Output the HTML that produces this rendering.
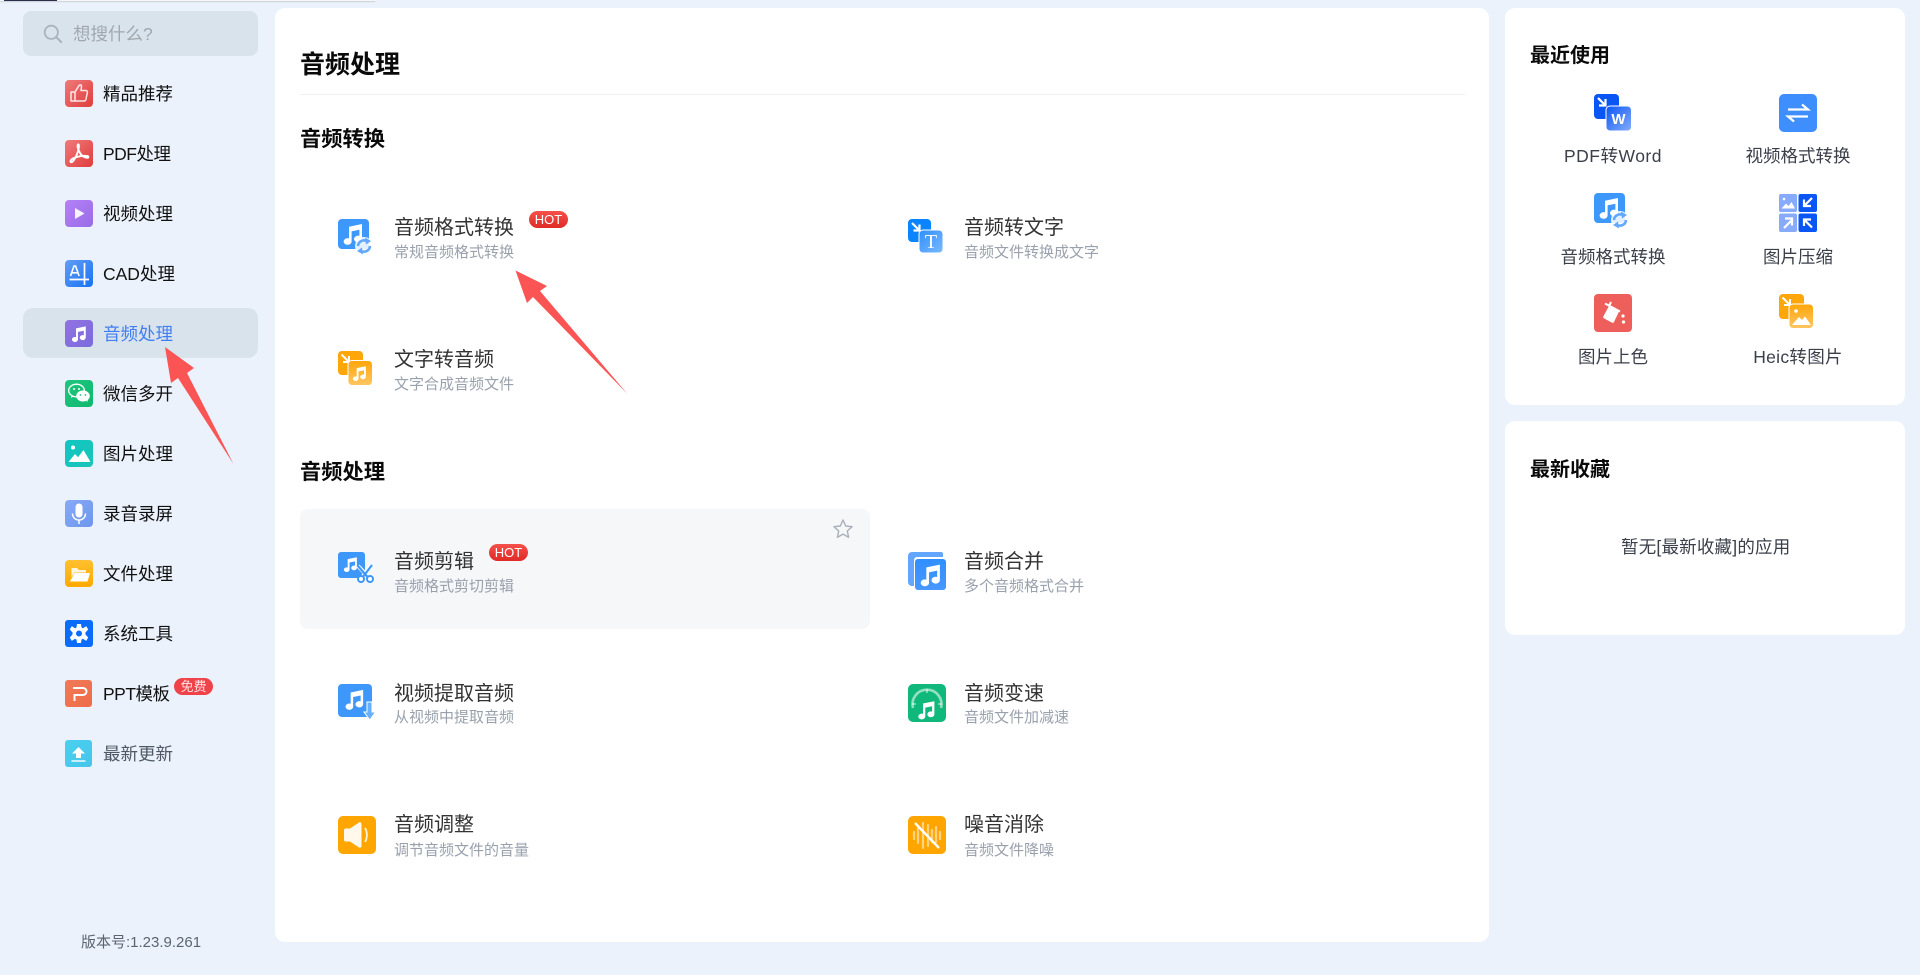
<!DOCTYPE html>
<html lang="zh">
<head>
<meta charset="utf-8">
<title>音频处理</title>
<style>
html,body{margin:0;padding:0;width:1920px;height:975px;overflow:hidden;background:#ebf2fb;}
body{position:relative;font-family:"Liberation Sans","Noto Sans CJK SC",sans-serif;color:#222;}
div,span,svg{position:absolute;}
.t{white-space:nowrap;line-height:30px;height:30px;}
.m{left:103px;font-size:17.5px;color:#111;}
.card{background:#fff;border-radius:10px;}
.h1{font-size:25px;font-weight:700;color:#0a0a0a;}
.h2{font-size:21.25px;font-weight:700;color:#0a0a0a;}
.h3{font-size:20px;font-weight:700;color:#0a0a0a;}
.a{font-size:20px;color:#333;}
.b{font-size:15px;color:#99a1ad;}
.r{font-size:17.5px;color:#3a3f4a;width:200px;text-align:center;}
.hot{width:39px;height:17px;border-radius:9px;background:linear-gradient(#f5504a,#df2a27);color:#fff;font-size:13px;line-height:17px;text-align:center;}
</style>
</head>
<body>
<svg width="0" height="0" style="left:0;top:0">
<defs>
<symbol id="note" viewBox="0 0 24 24"><path fill="#fff" d="M8 5.200 21 2.500V17.500a4 3.300 0 1 1-2.600-3.100V8.300L10.600 9.900V20a4 3.300 0 1 1-2.600-3.100z"/></symbol>
<symbol id="swap" viewBox="0 0 18 18"><circle cx="9" cy="9" r="9" fill="#fff" fill-opacity=".85"/><path d="M3 9a6 6 0 0 1 9.500-4.500" fill="none" stroke="#62a8fb" stroke-width="2.600"/><path d="M10 .5l6 3.500-5 3.500z" fill="#62a8fb"/><path d="M15 9a6 6 0 0 1-9.500 4.500" fill="none" stroke="#62a8fb" stroke-width="2.600"/><path d="M8 17.500l-6-3.500 5-3.500z" fill="#62a8fb"/></symbol>
<linearGradient id="gRed" x1="0" y1="0" x2="1" y2="1"><stop offset="0" stop-color="#f07a7a"/><stop offset="1" stop-color="#e03c3c"/></linearGradient>
<linearGradient id="gPur" x1="0" y1="0" x2="1" y2="1"><stop offset="0" stop-color="#b581f7"/><stop offset="1" stop-color="#986ce6"/></linearGradient>
<linearGradient id="gCad" x1="0" y1="0" x2="1" y2="1"><stop offset="0" stop-color="#629ef5"/><stop offset="1" stop-color="#1873f3"/></linearGradient>
<linearGradient id="gAud" x1="0" y1="0" x2="1" y2="1"><stop offset="0" stop-color="#9372e4"/><stop offset="1" stop-color="#7a6bdc"/></linearGradient>
<linearGradient id="gWx" x1="0" y1="0" x2="1" y2="1"><stop offset="0" stop-color="#20c67f"/><stop offset="1" stop-color="#10b86e"/></linearGradient>
<linearGradient id="gImg" x1="0" y1="0" x2="1" y2="1"><stop offset="0" stop-color="#0fc7c2"/><stop offset="1" stop-color="#1cc3b8"/></linearGradient>
<linearGradient id="gMic" x1="0" y1="0" x2="1" y2="1"><stop offset="0" stop-color="#88aaf8"/><stop offset="1" stop-color="#6d96ec"/></linearGradient>
<linearGradient id="gFol" x1="0" y1="0" x2="0" y2="1"><stop offset="0" stop-color="#ffc02f"/><stop offset="1" stop-color="#ffa900"/></linearGradient>
<linearGradient id="gPpt" x1="0" y1="0" x2="1" y2="1"><stop offset="0" stop-color="#f27a56"/><stop offset="1" stop-color="#ee6c4a"/></linearGradient>
<linearGradient id="gUp" x1="0" y1="0" x2="1" y2="1"><stop offset="0" stop-color="#4ad0f0"/><stop offset="1" stop-color="#45c6ea"/></linearGradient>
<linearGradient id="gBlue2" x1="0" y1="0" x2="1" y2="1"><stop offset="0" stop-color="#2f8fff"/><stop offset="1" stop-color="#7ab9ff"/></linearGradient>
<linearGradient id="gWord" x1="0" y1="0" x2="1" y2="1"><stop offset="0" stop-color="#0a56f5"/><stop offset="1" stop-color="#86adfa"/></linearGradient>
<linearGradient id="gOr" x1="0" y1="0" x2="0" y2="1"><stop offset="0" stop-color="#ffa60a"/><stop offset="1" stop-color="#ffc661"/></linearGradient>
<linearGradient id="gMerge" x1="0" y1="0" x2="0" y2="1"><stop offset="0" stop-color="#2f8fff"/><stop offset="1" stop-color="#4897ff"/></linearGradient>
</defs>
</svg>

<!-- top strip -->
<div style="left:0;top:0;width:375px;height:1px;background:#f6f6f8;box-shadow:0 1px 1px #c5c8ce"></div>
<div style="left:4px;top:0;width:53px;height:1px;background:#2a2f4d"></div>

<!-- sidebar -->
<div style="left:23px;top:11px;width:235px;height:45px;background:#d9e3ec;border-radius:8px"></div>
<svg style="left:43px;top:24px" width="20" height="20" viewBox="0 0 20 20"><circle cx="8.300" cy="8.300" r="6.600" fill="none" stroke="#a9b3bf" stroke-width="1.800"/><path d="M13 13l5.200 5" stroke="#a9b3bf" stroke-width="2" stroke-linecap="round"/></svg>
<div class="t" style="left:73px;top:19px;font-size:17.5px;color:#a1a7ae">想搜什么?</div>
<div style="left:23px;top:308px;width:235px;height:50px;background:#d9e3ec;border-radius:10px"></div>

<svg style="left:65px;top:80px" width="28" height="27" viewBox="0 0 28 27"><rect width="28" height="27" rx="4" fill="url(#gRed)"/><path d="M6 12h4v9H6zM10 12l4-6.500c1-1.200 2.600-.5 2.500 1L16 10.500h5c1 0 1.600.9 1.400 1.800l-1.500 7.200c-.2.900-.9 1.500-1.800 1.500H10" fill="none" stroke="#fff" stroke-opacity=".85" stroke-width="1.500" stroke-linejoin="round"/></svg>
<div class="t m" style="top:79px">精品推荐</div>

<svg style="left:65px;top:140px" width="28" height="27" viewBox="0 0 28 27"><rect width="28" height="27" rx="4" fill="url(#gRed)"/><path d="M13 4.500c-1.200 1 .2 5.500 2 8.500 1.500 2.500 4 4.500 7 4.800 1.600.1 1.800-1.500.3-1.800-4-.7-10 .3-14.500 2.500-2 1-3 3.300-1.800 3.700 1.300.4 3-2 4.700-5.200 1.700-3.200 3.200-8.500 3.200-10.700 0-1.700-.4-2.300-.9-1.800z" fill="none" stroke="#fff" stroke-width="1.900" stroke-linejoin="round"/></svg>
<div class="t m" style="top:139px;letter-spacing:-.5px">PDF处理</div>

<svg style="left:65px;top:200px" width="28" height="27" viewBox="0 0 28 27"><rect width="28" height="27" rx="4" fill="url(#gPur)"/><path d="M10 8l9.500 5.500L10 19z" fill="#fff" fill-opacity=".92"/></svg>
<div class="t m" style="top:199px">视频处理</div>

<svg style="left:65px;top:260px" width="28" height="27" viewBox="0 0 28 27"><rect width="28" height="27" rx="4" fill="url(#gCad)"/><path d="M4.500 19.500h19.500M19.500 3v22" stroke="#fff" stroke-width="1.700" fill="none"/><path d="M5.500 16l3.500-10h1.600l3.500 10M7 12.800h5.500" stroke="#fff" stroke-width="1.600" fill="none"/></svg>
<div class="t m" style="top:259px">CAD处理</div>

<svg style="left:65px;top:320px" width="28" height="27" viewBox="0 0 28 27"><rect width="28" height="27" rx="4" fill="url(#gAud)"/><use href="#note" x="5" y="4.500" width="18" height="18"/></svg>
<div class="t m" style="top:319px;color:#417ff0">音频处理</div>

<svg style="left:65px;top:380px" width="28" height="27" viewBox="0 0 28 27"><rect width="28" height="27" rx="4" fill="url(#gWx)"/><ellipse cx="11.500" cy="10.500" rx="7.800" ry="6.300" fill="none" stroke="#fff" stroke-width="1.300"/><path d="M6.500 15l-.5 3 3-1.700z" fill="#fff"/><ellipse cx="18" cy="16" rx="6.800" ry="5.500" fill="#fff"/><path d="M21 20l1.800 2.300-.3-3.300z" fill="#fff"/><circle cx="9" cy="9" r="1" fill="#fff"/><circle cx="14" cy="9" r="1" fill="#fff"/><circle cx="15.500" cy="15" r=".9" fill="#1fc07a"/><circle cx="20.500" cy="15" r=".9" fill="#1fc07a"/></svg>
<div class="t m" style="top:379px">微信多开</div>

<svg style="left:65px;top:440px" width="28" height="27" viewBox="0 0 28 27"><rect width="28" height="27" rx="4" fill="url(#gImg)"/><circle cx="8" cy="7.500" r="2" fill="#fff"/><path d="M3.500 22l6.500-8 3 3.300 5.500-7.300L25.500 22z" fill="#fff"/></svg>
<div class="t m" style="top:439px">图片处理</div>

<svg style="left:65px;top:500px" width="28" height="27" viewBox="0 0 28 27"><rect width="28" height="27" rx="4" fill="url(#gMic)"/><rect x="10.500" y="3.500" width="7" height="14" rx="3.500" fill="#fff"/><path d="M7.500 13.500c0 4 3 6.500 6.500 6.500s6.500-2.500 6.500-6.500M14 20v4" fill="none" stroke="#fff" stroke-width="1.500"/></svg>
<div class="t m" style="top:499px">录音录屏</div>

<svg style="left:65px;top:560px" width="28" height="27" viewBox="0 0 28 27"><rect width="28" height="27" rx="4" fill="url(#gFol)"/><path d="M6.500 8h5.500l2 2h7v2.500H9.500L6.500 17z" fill="#fff" fill-opacity=".85"/><path d="M9.500 13H25l-2.500 8.500H5z" fill="#fff"/></svg>
<div class="t m" style="top:559px">文件处理</div>

<svg style="left:65px;top:620px" width="28" height="27" viewBox="0 0 28 27"><rect width="28" height="27" rx="3" fill="#0a6cf8"/><g fill="#fff"><circle cx="14" cy="13.500" r="6.500"/><path d="M12 4h4l.6 4h-5.200zM12 23h4l.6-4h-5.200zM4.800 9.500l2-3.400 3.400 2.300-2.600 4.200zM23.200 9.500l-2-3.400-3.400 2.300 2.600 4.200zM4.800 17.500l2 3.400 3.400-2.300-2.600-4.200zM23.200 17.500l-2 3.400-3.400-2.300 2.600-4.200z"/></g><circle cx="14" cy="13.500" r="3" fill="#0a6cf8"/></svg>
<div class="t m" style="top:619px">系统工具</div>

<svg style="left:65px;top:680px" width="27" height="27" viewBox="0 0 27 27"><rect width="27" height="27" rx="3" fill="url(#gPpt)"/><path d="M8 8h10a3 3 0 0 1 0 7H9.500v6" fill="none" stroke="#fff" stroke-width="2"/></svg>
<div class="t m" style="top:679px;letter-spacing:-.5px">PPT模板</div>
<div style="left:174px;top:678px;width:39px;height:17px;border-radius:9px;background:#ef4349;color:#ffe3e3;font-size:13px;line-height:17px;text-align:center">免费</div>

<svg style="left:65px;top:740px" width="27" height="27" viewBox="0 0 27 27"><rect width="27" height="27" rx="3" fill="url(#gUp)"/><path d="M13.500 7l6.500 6.500h-4V18h-5v-4.500H7z" fill="#fff"/><path d="M6.500 21h14" stroke="#fff" stroke-width="1.400"/></svg>
<div class="t m" style="top:739px;color:#4f5866">最新更新</div>

<div class="t" style="left:81px;top:928px;font-size:15px;color:#5b6572">版本号:1.23.9.261</div>

<!-- main card -->
<div class="card" style="left:275px;top:8px;width:1214px;height:934px"></div>
<div class="t h1" style="left:300px;top:50px">音频处理</div>
<div style="left:300px;top:94px;width:1165px;height:1px;background:#eff1f4"></div>
<div class="t h2" style="left:300px;top:124px">音频转换</div>
<div class="t h2" style="left:300px;top:457px">音频处理</div>
<div style="left:300px;top:509px;width:570px;height:120px;background:#f5f7f9;border-radius:8px"></div>
<svg style="left:832px;top:518px" width="22" height="21" viewBox="0 0 22 21"><path d="M11 2l2.700 6 6.300.7-4.700 4.300 1.300 6.300L11 16.100 5.400 19.300 6.700 13 2 8.700 8.300 8z" fill="none" stroke="#a9b0ba" stroke-width="1.400" stroke-linejoin="round"/></svg>

<!-- audio format convert -->
<svg style="left:338px;top:219px" width="36" height="37" viewBox="0 0 36 37"><rect width="31" height="30" rx="4" fill="#3e97fb"/><use href="#note" x="3" y="2.500" width="24" height="24"/><use href="#swap" x="17" y="18" width="18" height="18"/></svg>
<div class="t a" style="left:394px;top:213px">音频格式转换</div>
<div class="t b" style="left:394px;top:238px">常规音频格式转换</div>
<div class="hot" style="left:529px;top:211px">HOT</div>

<!-- audio to text -->
<svg style="left:908px;top:219px" width="36" height="35" viewBox="0 0 36 35"><rect width="23" height="23" rx="4" fill="#0a84ff"/><path d="M4 4l7 7M11.500 5.500v6h-6" stroke="#fff" stroke-width="2.200" fill="none"/><rect x="11" y="11" width="24" height="23" rx="4" fill="url(#gBlue2)" stroke="#fff" stroke-width="1"/><text x="23" y="29" font-family="Liberation Serif,serif" font-size="20" fill="#fff" text-anchor="middle">T</text></svg>
<div class="t a" style="left:964px;top:213px">音频转文字</div>
<div class="t b" style="left:964px;top:238px">音频文件转换成文字</div>

<!-- text to audio -->
<svg style="left:338px;top:351px" width="35" height="35" viewBox="0 0 35 35"><rect width="25" height="24" rx="4" fill="#ffa60a"/><path d="M3.500 3.500l7 7M11 5v6H5" stroke="#fff" stroke-width="2" fill="none"/><rect x="10" y="9.500" width="24.500" height="25" rx="4" fill="url(#gOr)" stroke="#fff" stroke-width="1"/><use href="#note" x="13" y="13.500" width="17" height="17"/></svg>
<div class="t a" style="left:394px;top:345px">文字转音频</div>
<div class="t b" style="left:394px;top:370px">文字合成音频文件</div>

<!-- cut -->
<svg style="left:338px;top:552px" width="37" height="32" viewBox="0 0 37 32"><rect width="27" height="26" rx="3" fill="#3e97fb"/><use href="#note" x="4" y="3.500" width="17" height="17"/><path d="M20 14l11 11.500M34 13l-10 12.500" stroke="#fff" stroke-width="4"/><path d="M20 14l10 11.500M34 13l-9.500 12.500" stroke="#3e97fb" stroke-width="2.200"/><circle cx="23" cy="27" r="3" fill="#fff" stroke="#3e97fb" stroke-width="2"/><circle cx="32" cy="27" r="3" fill="#fff" stroke="#3e97fb" stroke-width="2"/></svg>
<div class="t a" style="left:394px;top:547px">音频剪辑</div>
<div class="t b" style="left:394px;top:572px">音频格式剪切剪辑</div>
<div class="hot" style="left:489px;top:544px">HOT</div>

<!-- merge -->
<svg style="left:908px;top:552px" width="38" height="38" viewBox="0 0 38 38"><path d="M4 0h29a2 2 0 0 1 2 2v3H9a3 3 0 0 0-3 3v26H4a4 4 0 0 1-4-4V4a4 4 0 0 1 4-4z" fill="#62a6ff"/><rect x="7" y="7" width="31" height="31" rx="3" fill="url(#gMerge)"/><use href="#note" x="10" y="10" width="25" height="25"/></svg>
<div class="t a" style="left:964px;top:547px">音频合并</div>
<div class="t b" style="left:964px;top:572px">多个音频格式合并</div>

<!-- video extract -->
<svg style="left:338px;top:684px" width="38" height="38" viewBox="0 0 38 38"><rect width="34" height="33" rx="4" fill="#3e97fb"/><use href="#note" x="5" y="3.500" width="23" height="23"/><path d="M29 18h5v10h3.500l-5.700 8-5.800-8H29z" fill="#6aaffc" stroke="#fff" stroke-width="1"/></svg>
<div class="t a" style="left:394px;top:679px">视频提取音频</div>
<div class="t b" style="left:394px;top:703px">从视频中提取音频</div>

<!-- speed -->
<svg style="left:908px;top:684px" width="38" height="38" viewBox="0 0 38 38"><rect width="38" height="38" rx="5" fill="#10b97b"/><path d="M5 24a14.500 14.500 0 1 1 28 0" fill="none" stroke="#fff" stroke-opacity=".55" stroke-width="2.600"/><path d="M19 5v4M4 20h4M30 20h4" stroke="#fff" stroke-opacity=".55" stroke-width="1.600"/><use href="#note" x="8" y="15" width="21" height="21"/></svg>
<div class="t a" style="left:964px;top:679px">音频变速</div>
<div class="t b" style="left:964px;top:703px">音频文件加减速</div>

<!-- volume -->
<svg style="left:338px;top:816px" width="38" height="38" viewBox="0 0 38 38"><rect width="38" height="38" rx="5" fill="#ffa500"/><path d="M6 14c0-.8.7-1.500 1.500-1.500H12l9-6c1-.6 2.500 0 2.500 1.200v22.600c0 1.200-1.500 1.800-2.500 1.200l-9-6H7.500C6.700 25.500 6 24.800 6 24z" fill="#fff" fill-opacity=".92"/><path d="M27 12c2.500 4 2.500 10 0 14" fill="none" stroke="#fff" stroke-opacity=".85" stroke-width="1.800"/></svg>
<div class="t a" style="left:394px;top:810px">音频调整</div>
<div class="t b" style="left:394px;top:836px">调节音频文件的音量</div>

<!-- noise -->
<svg style="left:908px;top:816px" width="38" height="38" viewBox="0 0 38 38"><rect width="38" height="38" rx="5" fill="#ffa500"/><path d="M6 16v7M10 12v15M15 7v25M20 9v21M24 14v12M28 11v15M32 16v7" stroke="#fff" stroke-opacity=".5" stroke-width="2.200" stroke-linecap="round"/><path d="M7 7l24 25" stroke="#fff" stroke-width="2.400"/></svg>
<div class="t a" style="left:964px;top:810px">噪音消除</div>
<div class="t b" style="left:964px;top:836px">音频文件降噪</div>

<!-- right cards -->
<div class="card" style="left:1505px;top:8px;width:400px;height:397px"></div>
<div class="card" style="left:1505px;top:421px;width:400px;height:214px"></div>
<div class="t h3" style="left:1530px;top:41px">最近使用</div>
<div class="t h3" style="left:1530px;top:455px">最新收藏</div>
<div class="t" style="left:1621px;top:532px;font-size:17.5px;color:#3a3f4a;letter-spacing:.2px">暂无[最新收藏]的应用</div>

<svg style="left:1594px;top:94px" width="38" height="38" viewBox="0 0 38 38"><rect width="25" height="25" rx="4" fill="#0a56f5"/><path d="M4 4l7 7M11.500 5v6.500H5" stroke="#fff" stroke-width="2.200" fill="none"/><rect x="12" y="12" width="25.500" height="25" rx="4" fill="url(#gWord)" stroke="#fff" stroke-width="1"/><text x="24.500" y="30" font-family="Liberation Sans,sans-serif" font-weight="700" font-size="15" fill="#fff" text-anchor="middle">W</text></svg>
<div class="t r" style="left:1513px;top:141px;letter-spacing:.5px">PDF转Word</div>

<svg style="left:1779px;top:94px" width="38" height="38" viewBox="0 0 38 38"><rect width="38" height="38" rx="5" fill="#3e8ffd"/><path d="M9 15.500h20l-6-5M29 22.500H9l6 5" fill="none" stroke="#fff" stroke-width="2.200"/></svg>
<div class="t r" style="left:1698px;top:141px">视频格式转换</div>

<svg style="left:1594px;top:193px" width="36" height="37" viewBox="0 0 36 37"><rect width="31" height="30" rx="4" fill="#3e97fb"/><use href="#note" x="3" y="2.500" width="24" height="24"/><use href="#swap" x="17" y="18" width="18" height="18"/></svg>
<div class="t r" style="left:1513px;top:242px">音频格式转换</div>

<svg style="left:1779px;top:194px" width="38" height="38" viewBox="0 0 38 38"><rect width="18" height="18" rx="2" fill="#87aafb"/><rect x="19.500" width="18.500" height="18" rx="2" fill="#0a56f5"/><rect y="19.500" width="18" height="18.500" rx="2" fill="#87aafb"/><rect x="19.500" y="19.500" width="18.500" height="18.500" rx="2" fill="#0a56f5"/><circle cx="5" cy="5" r="1.300" fill="#fff"/><path d="M2.500 14.500l4.500-5 2.500 2.500 3-4 3.500 6.500z" fill="#fff"/><path d="M33 4l-7.500 7.500M25 5.500v6.500h7M5 34l7.500-7.500M6 24.500h7v7M33 33.500l-7.500-7.500M25 32v-6.500h7" stroke="#fff" stroke-width="2.200" fill="none"/></svg>
<div class="t r" style="left:1698px;top:242px">图片压缩</div>

<svg style="left:1594px;top:294px" width="38" height="38" viewBox="0 0 38 38"><rect width="38" height="38" rx="4" fill="#ee5f5c"/><path d="M15.500 11l10 5.500-5.500 11.500c-.4.800-1.200 1-2 .6l-8-4.200c-.8-.4-1-1.300-.6-2z" fill="#fff"/><path d="M11 9.500l15 8" stroke="#fff" stroke-width="2"/><path d="M17 8l-1.500 3" stroke="#fff" stroke-width="2"/><circle cx="29" cy="22" r="1.600" fill="#fff"/><circle cx="29.500" cy="28" r="1.600" fill="#fff"/></svg>
<div class="t r" style="left:1513px;top:342px">图片上色</div>

<svg style="left:1779px;top:294px" width="35" height="35" viewBox="0 0 35 35"><rect width="25" height="25" rx="4" fill="#ffa60a"/><path d="M3.500 3.500l7 7M11 5v6H5" stroke="#fff" stroke-width="2" fill="none"/><rect x="10" y="10" width="24.500" height="24.500" rx="4" fill="url(#gOr)" stroke="#fff" stroke-width="1"/><circle cx="17" cy="17" r="1.800" fill="#fff"/><path d="M13 31l7-8 3 3 3-3.500 6 8.500z" fill="#fff"/></svg>
<div class="t r" style="left:1698px;top:342px;letter-spacing:.3px">Heic转图片</div>

<!-- red arrows -->
<svg style="left:0;top:0" width="1920" height="975" viewBox="0 0 1920 975">
<path fill="#fb5454" d="M165 347L194 368 187 373 233.500 464 178 378 171 383z"/>
<path fill="#fb5454" d="M515.500 270.500L547 286 540 291 627.500 394 533 297 527 303z"/>
</svg>
</body>
</html>
